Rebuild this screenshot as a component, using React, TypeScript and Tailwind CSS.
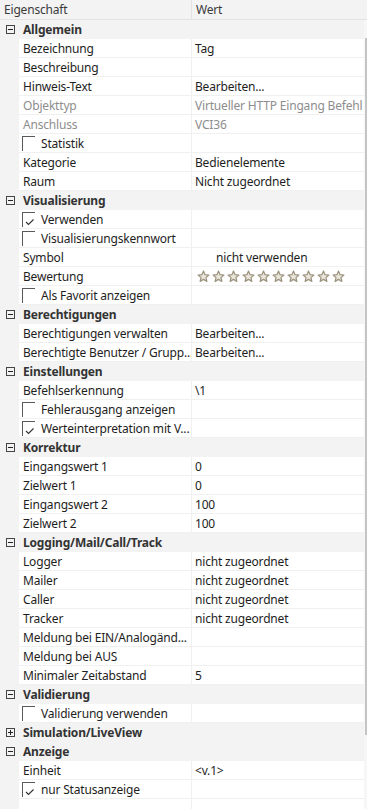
import React from "react";

type Row =
  | { kind: "section"; label: string; open?: boolean }
  | {
      kind: "prop";
      name: string;
      value?: string;
      disabled?: boolean;
      check?: boolean;
      indent?: boolean;
      stars?: number;
    };

const rows: Row[] = [
  { kind: "section", label: "Allgemein", open: true },
  { kind: "prop", name: "Bezeichnung", value: "Tag" },
  { kind: "prop", name: "Beschreibung" },
  { kind: "prop", name: "Hinweis-Text", value: "Bearbeiten..." },
  { kind: "prop", name: "Objekttyp", value: "Virtueller HTTP Eingang Befehl", disabled: true },
  { kind: "prop", name: "Anschluss", value: "VCI36", disabled: true },
  { kind: "prop", name: "Statistik", check: false },
  { kind: "prop", name: "Kategorie", value: "Bedienelemente" },
  { kind: "prop", name: "Raum", value: "Nicht zugeordnet" },
  { kind: "section", label: "Visualisierung", open: true },
  { kind: "prop", name: "Verwenden", check: true },
  { kind: "prop", name: "Visualisierungskennwort", check: false },
  { kind: "prop", name: "Symbol", value: "nicht verwenden", indent: true },
  { kind: "prop", name: "Bewertung", stars: 10 },
  { kind: "prop", name: "Als Favorit anzeigen", check: false },
  { kind: "section", label: "Berechtigungen", open: true },
  { kind: "prop", name: "Berechtigungen verwalten", value: "Bearbeiten..." },
  { kind: "prop", name: "Berechtigte Benutzer / Grupp...", value: "Bearbeiten..." },
  { kind: "section", label: "Einstellungen", open: true },
  { kind: "prop", name: "Befehlserkennung", value: "\\1" },
  { kind: "prop", name: "Fehlerausgang anzeigen", check: false },
  { kind: "prop", name: "Werteinterpretation mit V...", check: true },
  { kind: "section", label: "Korrektur", open: true },
  { kind: "prop", name: "Eingangswert 1", value: "0" },
  { kind: "prop", name: "Zielwert 1", value: "0" },
  { kind: "prop", name: "Eingangswert 2", value: "100" },
  { kind: "prop", name: "Zielwert 2", value: "100" },
  { kind: "section", label: "Logging/Mail/Call/Track", open: true },
  { kind: "prop", name: "Logger", value: "nicht zugeordnet" },
  { kind: "prop", name: "Mailer", value: "nicht zugeordnet" },
  { kind: "prop", name: "Caller", value: "nicht zugeordnet" },
  { kind: "prop", name: "Tracker", value: "nicht zugeordnet" },
  { kind: "prop", name: "Meldung bei EIN/Analogänd..." },
  { kind: "prop", name: "Meldung bei AUS" },
  { kind: "prop", name: "Minimaler Zeitabstand", value: "5" },
  { kind: "section", label: "Validierung", open: true },
  { kind: "prop", name: "Validierung verwenden", check: false },
  { kind: "section", label: "Simulation/LiveView", open: false },
  { kind: "section", label: "Anzeige", open: true },
  { kind: "prop", name: "Einheit", value: "<v.1>" },
  { kind: "prop", name: "nur Statusanzeige", check: true },
  { kind: "prop", name: "" },
];

function Expander({ open }: { open?: boolean }) {
  return (
    <svg width="9" height="9" viewBox="0 0 9 9" className="block">
      <rect x="0.5" y="0.5" width="8" height="8" fill="none" stroke="#444" />
      <line x1="2" y1="4.5" x2="7" y2="4.5" stroke="#222" />
      {!open && <line x1="4.5" y1="2" x2="4.5" y2="7" stroke="#222" />}
    </svg>
  );
}

function Checkbox({ checked }: { checked?: boolean }) {
  return (
    <div className="w-[13px] h-[15px] border-l border-t border-[#5a5a5a] relative shrink-0">
      {checked && (
        <svg width="10" height="8" viewBox="0 0 10 8" className="absolute left-[2px] top-[5px]">
          <path d="M1 4 L3.5 6.5 L8.5 1.5" fill="none" stroke="#333" strokeWidth="1.1" />
        </svg>
      )}
    </div>
  );
}

function Star() {
  return (
    <svg width="13" height="13" viewBox="0 0 24 24" className="block">
      <path
        d="M12 2 L14.9 8.6 L22 9.3 L16.6 14 L18.2 21 L12 17.3 L5.8 21 L7.4 14 L2 9.3 L9.1 8.6 Z"
        fill="#e9e5da"
        stroke="#9c937f"
        strokeWidth="2.2"
        strokeLinejoin="round"
      />
    </svg>
  );
}

function PropRow({ row }: { row: Extract<Row, { kind: "prop" }> }) {
  const tone = row.disabled ? "text-[#8d8d8d]" : "text-[#1e1e1e]";
  return (
    <div className="flex h-[19px]">
      <div className="w-[19px] bg-[#f3f3f3] shrink-0" />
      <div className="w-[173px] bg-white border-b border-r border-[#f0f0f0] flex items-center shrink-0 overflow-hidden">
        {row.check !== undefined ? (
          <div className="flex items-center pl-[3px] gap-[6px]">
            <Checkbox checked={row.check} />
            <span className="text-[#1e1e1e] whitespace-nowrap pt-[1px]">{row.name}</span>
          </div>
        ) : (
          <span className={`pl-[4px] pt-[1px] whitespace-nowrap ${tone}`}>{row.name}</span>
        )}
      </div>
      <div className="flex-1 bg-white border-b border-[#f0f0f0] flex items-center overflow-hidden">
        {row.stars ? (
          <div className="flex gap-[2px] pl-[5px]">
            {Array.from({ length: row.stars }).map((_, i) => (
              <Star key={i} />
            ))}
          </div>
        ) : (
          <span
            className={`whitespace-nowrap pt-[1px] ${tone} ${row.indent ? "pl-[24px]" : "pl-[3px]"}`}
          >
            {row.value}
          </span>
        )}
      </div>
    </div>
  );
}

export default function App() {
  return (
    <div
      className="w-[367px] h-[809px] overflow-hidden bg-white text-[12px] leading-none tracking-[-0.18px] select-none"
      style={{ fontFamily: '"Noto Sans", "Open Sans", sans-serif' }}
    >
      <div className="flex h-[20px] bg-[#f3f3f3] border-b border-[#e3e3e3] text-[#3a3a3a]">
        <div className="w-[192px] border-r border-[#e3e3e3] flex items-center pl-[4px]">
          Eigenschaft
        </div>
        <div className="flex-1 flex items-center pl-[4px]">Wert</div>
      </div>
      <div className="flex">
        <div className="w-[364px]">
          {rows.map((row, i) =>
            row.kind === "section" ? (
              <div key={i} className="flex h-[19px] bg-[#f3f3f3] items-center">
                <div className="w-[19px] flex justify-center pl-[1px]">
                  <Expander open={row.open} />
                </div>
                <span className="pl-[4px] pt-[1px] font-bold text-[#333]">{row.label}</span>
              </div>
            ) : (
              <PropRow key={i} row={row} />
            )
          )}
        </div>
        <div className="w-[3px] bg-[#f7f7f7] relative">
          <div className="w-[2px] ml-[1px] mt-[18px] h-[697px] bg-[#c4c4c4]" />
        </div>
      </div>
    </div>
  );
}
